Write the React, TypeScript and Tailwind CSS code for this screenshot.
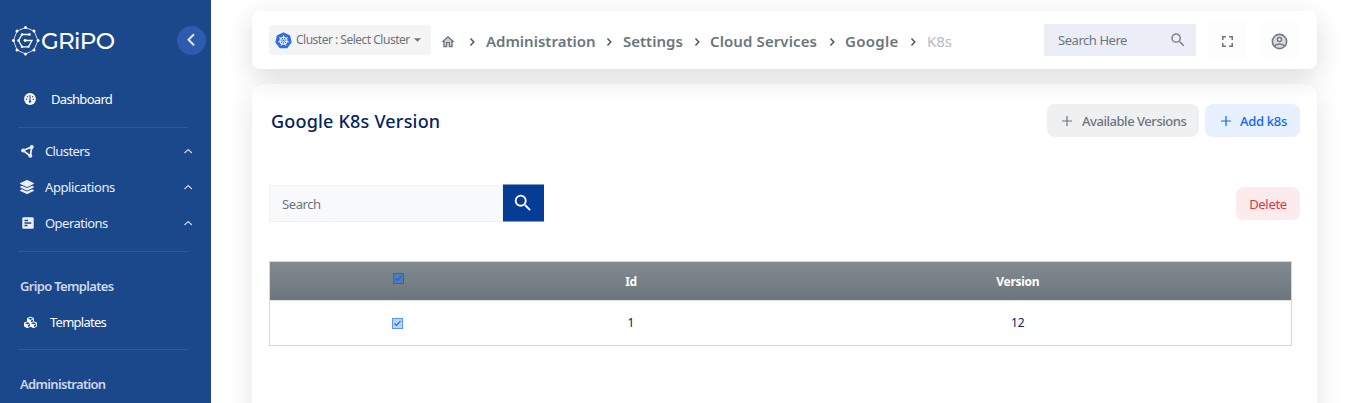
import type { ReactNode } from "react";
import { FaLayerGroup, FaCubes } from "react-icons/fa";

type IconProps = { className?: string };

function Logo() {
  const outer: [number, number][] = [[13.5, 1.5], [22, 5], [26, 14.5], [22, 24], [13.5, 28], [5, 24], [1.5, 14.5], [5, 5]];
  return (
    <svg viewBox="0 0 28 30" className="h-[30px] w-[28px] text-white" fill="none" stroke="currentColor">
      <polygon points={outer.map((p) => p.join(",")).join(" ")} strokeWidth=".8" />
      {outer.map(([x, y]) => (
        <circle key={x + "-" + y} cx={x} cy={y} r="1.5" fill="currentColor" stroke="none" />
      ))}
      <path d="M17.500 8.500H10L6.500 14.500L10 20.800H16.500L20 14.500H13" strokeWidth="1.300" />
      <g fill="currentColor" stroke="none">
        <circle cx="17.500" cy="8.500" r="1.300" />
        <circle cx="10" cy="8.500" r="1.200" />
        <circle cx="6.500" cy="14.500" r="1.300" />
        <circle cx="10" cy="20.800" r="1.200" />
        <circle cx="16.500" cy="20.800" r="1" />
        <circle cx="13" cy="14.500" r="1.400" />
      </g>
    </svg>
  );
}

function GaugeIcon({ className }: IconProps) {
  return (
    <svg viewBox="0 0 12 12" className={className}>
      <circle cx="6" cy="6" r="5.900" fill="currentColor" />
      <path d="M6 2V8" stroke="#1b478b" strokeWidth="1.100" />
      <circle cx="6" cy="8.600" r="1.200" fill="#1b478b" />
      <circle cx="3.500" cy="3.700" r=".7" fill="#1b478b" />
      <circle cx="8.500" cy="3.700" r=".7" fill="#1b478b" />
      <circle cx="2.500" cy="6.200" r=".8" fill="#1b478b" />
      <circle cx="9.500" cy="6.200" r=".8" fill="#1b478b" />
    </svg>
  );
}

function ClusterIcon({ className }: IconProps) {
  return (
    <svg viewBox="0 0 13 13" className={className}>
      <path d="M2 5.500L10.800 1.900L9.300 11Z" fill="none" stroke="currentColor" strokeWidth="1.800" />
      <circle cx="2.100" cy="5.500" r="2" fill="currentColor" />
      <circle cx="10.800" cy="2.100" r="2" fill="currentColor" />
      <circle cx="9.300" cy="10.800" r="2" fill="currentColor" />
    </svg>
  );
}

function OperationsIcon({ className }: IconProps) {
  return (
    <svg viewBox="0 0 12 12" className={className}>
      <rect x=".3" y=".3" width="11.400" height="11.400" rx="1.300" fill="currentColor" />
      <path d="M2.500 3.500H6M2.500 6H9.300M2.500 8.500H5.500" stroke="#1b478b" strokeWidth="1.400" />
    </svg>
  );
}

function KubernetesIcon() {
  const spokes = [0, 51.43, 102.86, 154.29, 205.71, 257.14, 308.57];
  return (
    <svg viewBox="0 0 18 18" className="h-[17px] w-[17px] shrink-0">
      <path d="M9 1.200L15.300 4.200L16.800 11L12.500 16.500H5.500L1.200 11L2.700 4.200Z" fill="#326ce5" stroke="#326ce5" strokeWidth="1.600" strokeLinejoin="round" />
      <g stroke="#fff" fill="none">
        <circle cx="9" cy="9.200" r="3.700" strokeWidth="1.100" />
        {spokes.map((a) => (
          <path key={a} d="M9 8.400V3.400" strokeWidth=".9" transform={`rotate(${a} 9 9.200)`} />
        ))}
      </g>
    </svg>
  );
}

function HomeIcon() {
  return (
    <svg viewBox="0 0 24 24" className="h-4 w-4" fill="#6c757d">
      <path opacity=".35" d="M5 9.800V19h4v-6h6v6h4V9.800l-7-6.300z" />
      <path d="M12 3L2 12h3v8h6v-6h2v6h6v-8h3L12 3zm5 15h-2v-6H9v6H7v-7.810l5-4.500 5 4.500V18z" />
    </svg>
  );
}

function SearchIcon({ className }: IconProps) {
  return (
    <svg viewBox="0 0 24 24" className={className} fill="currentColor">
      <path d="M15.500 14h-.79l-.28-.27A6.471 6.471 0 0 0 16 9.500 6.500 6.500 0 1 0 9.500 16c1.610 0 3.090-.59 4.230-1.570l.27.28v.79l5 4.990L20.490 19l-4.990-5zm-6 0C7.010 14 5 11.990 5 9.500S7.010 5 9.500 5 14 7.010 14 9.500 11.990 14 9.500 14z" />
    </svg>
  );
}

function PlusIcon({ className }: IconProps) {
  return (
    <svg viewBox="0 0 10 10" className={className}>
      <path d="M5 0V10M0 5H10" stroke="currentColor" strokeWidth="1.200" />
    </svg>
  );
}

function Caret({ className }: IconProps) {
  return (
    <svg viewBox="0 0 10 10" className={className} fill="none" stroke="#495057">
      <path d="M3.500 1.500L6.800 5L3.500 8.500" strokeWidth="1.400" />
    </svg>
  );
}

function Group({ icon, children }: { icon: ReactNode; children: ReactNode }) {
  return (
    <div className="flex h-9 items-center pl-5 pr-[18px] text-[#e9eef7]">
      <span className="flex w-[25px]">{icon}</span>
      <span className="flex-1 pt-[2px] text-[13px]">{children}</span>
      <svg viewBox="0 0 10 10" className="h-[10px] w-[10px]" fill="none" stroke="#c8d4e8">
        <path d="M1.500 7L5.200 3.500L8.900 7" strokeWidth="1.200" />
      </svg>
    </div>
  );
}

function Divider() {
  return <div className="ml-[18px] mr-[23px] h-px shrink-0 bg-[#31599a]" />;
}

function Heading({ children }: { children: ReactNode }) {
  return (
    <div className="mt-[16px] flex h-9 shrink-0 items-center pl-5 pt-[2px] text-[13px] font-semibold tracking-[-0.68px] text-[#cbd7ea]">
      {children}
    </div>
  );
}

function Sidebar() {
  return (
    <aside className="flex h-full w-[211px] shrink-0 flex-col overflow-hidden bg-[#1b478b] text-white">
      <div className="flex h-[80px] shrink-0 items-center justify-between pl-3 pr-[5px]">
        <div className="flex items-center pt-[2px]">
          <Logo />
          <span className="ml-[1px] font-[Montserrat,'Lato',sans-serif] text-[23px] font-medium leading-none tracking-[-0.7px]">GRiPO</span>
        </div>
        <div className="flex h-[29px] w-[29px] items-center justify-center rounded-full bg-[#2d5cae]">
          <svg viewBox="0 0 14 14" className="h-[14px] w-[14px]" fill="none" stroke="#dbe5f5" strokeWidth="2">
            <path d="M9 1.200L3.500 6.700L9 12.200" />
          </svg>
        </div>
      </div>
      <div className="flex h-[38px] shrink-0 items-center pl-6 text-[13px] tracking-[-0.68px]">
        <GaugeIcon className="mr-[15px] h-3 w-3" />
        <span className="pt-[2px]">Dashboard</span>
      </div>
      <div className="h-[9px] shrink-0" />
      <Divider />
      <div className="mt-[5px] flex h-[118px] shrink-0 flex-col">
        <Group icon={<ClusterIcon className="ml-px h-[13px] w-[13px]" />}><span className="tracking-[-0.6px]">Clusters</span></Group>
        <Group icon={<FaLayerGroup size={14} />}><span className="tracking-[-0.4px]">Applications</span></Group>
        <Group icon={<OperationsIcon className="ml-[2px] h-3 w-3" />}><span className="tracking-[-0.53px]">Operations</span></Group>
      </div>
      <Divider />
      <Heading>Gripo Templates</Heading>
      <div className="flex h-9 shrink-0 items-center pl-6 text-[13px] tracking-[-0.75px]">
        <FaCubes size={13} className="mr-[13px]" />
        <span className="pt-[2px]">Templates</span>
      </div>
      <div className="h-[9px] shrink-0" />
      <Divider />
      <Heading>Administration</Heading>
    </aside>
  );
}

function Header() {
  return (
    <header className="relative z-10 flex h-[58px] shrink-0 items-center rounded-lg bg-white pl-[17px] pr-[19px] shadow-[0_8px_28px_rgba(0,0,0,0.14)]">
      <div className="flex h-[30px] w-[162px] shrink-0 items-center rounded bg-[#f4f4f4] pl-[6px] text-[12px] text-[#6c757d]">
        <KubernetesIcon />
        <span className="ml-1 whitespace-nowrap tracking-[-0.5px]">Cluster : Select Cluster</span>
        <svg viewBox="0 0 8 4" className="ml-1 h-1 w-[7px]" fill="#6c757d"><path d="M0 0H8L4 4Z" /></svg>
      </div>
      <nav className="flex items-center whitespace-nowrap pt-[3px] text-[15px] font-semibold text-[#6c757d]">
        <span className="ml-[9px]"><HomeIcon /></span>
        <Caret className="ml-[11px] mr-[9px] h-[10px] w-[10px]" />
        <span className="w-[109px]">Administration</span>
        <Caret className="mx-[9px] h-[10px] w-[10px]" />
        <span className="w-[60px]">Settings</span>
        <Caret className="ml-[9px] mr-2 h-[10px] w-[10px]" />
        <span className="w-[108px] tracking-[0.1px]">Cloud Services</span>
        <Caret className="ml-[9px] mr-2 h-[10px] w-[10px]" />
        <span className="w-[54px] tracking-[0.3px]">Google</span>
        <Caret className="mx-[9px] h-[10px] w-[10px]" />
        <span className="font-normal text-[#b5bcc5]">K8s</span>
      </nav>
      <div className="ml-auto flex h-8 w-[152px] items-center justify-between bg-[#ebeef7] pl-[14px] pr-[9px] text-[13px] text-[#6c757d]">
        <span className="pt-px tracking-[-0.45px]">Search Here</span>
        <SearchIcon className="h-[18px] w-[18px] text-[#7e8390]" />
      </div>
      <div className="ml-[12px] flex h-[38px] w-[38px] items-center justify-center bg-[#fdfdfe] pt-[2px]">
        <svg viewBox="0 0 24 24" className="h-[19px] w-[19px]" fill="#6c757d"><path d="M7 14H5v5h5v-2H7v-3zm-2-4h2V7h3V5H5v5zm12 7h-3v2h5v-5h-2v3zM14 5v2h3v3h2V5h-5z" /></svg>
      </div>
      <div className="ml-[14px] flex h-[38px] w-[38px] items-center justify-center bg-[#fdfdfe] pt-[2px]">
        <svg viewBox="0 0 24 24" className="h-[19px] w-[19px]" fill="none" stroke="#777b81" strokeWidth="2">
          <circle cx="12" cy="12" r="9" fill="#d8dadd" />
          <circle cx="12" cy="9.500" r="2.500" fill="#fff" />
          <path d="M5.500 18C8 14.300 16 14.300 18.500 18" />
        </svg>
      </div>
    </header>
  );
}

function CheckBox({ dark }: { dark?: boolean }) {
  return (
    <svg viewBox="0 0 11 11" className="h-[11px] w-[11px]" role="img">
      <rect x=".5" y=".5" width="10" height="10" fill={dark ? "#4f7cb8" : "#bcd4fb"} stroke={dark ? "#1c65e5" : "#5a94f5"} />
      <path d="M2.500 5.500L4.500 7.500L8.500 3.200" fill="none" stroke="#1c65e5" strokeWidth="1.200" />
    </svg>
  );
}

export default function App() {
  return (
    <div className="flex h-[403px] w-[1357px] overflow-hidden bg-white font-['Noto_Sans','Open_Sans',sans-serif]">
      <Sidebar />
      <main className="flex flex-1 flex-col pl-[41px] pr-10 pt-[11px]">
        <Header />
        <section className="mt-[15px] h-[360px] shrink-0 rounded-xl bg-white pl-[17px] pr-[17px] shadow-[0_8px_28px_rgba(0,0,0,0.11)]">
          <div className="flex h-[73px] items-center">
            <h1 className="pl-[2px] pt-[2px] text-[18px] font-medium tracking-[0.2px] text-[#05245c]">Google K8s Version</h1>
            <button className="ml-auto flex h-[33px] w-[152px] items-center rounded-lg bg-[#eff0f1] pl-[15px] text-[13px] font-medium text-[#6c757d]">
              <PlusIcon className="mr-[10px] mt-px h-[10px] w-[10px] shrink-0" />
              <span className="whitespace-nowrap pt-[2px] tracking-[-0.46px]">Available Versions</span>
            </button>
            <button className="ml-[6px] flex h-[33px] w-[95px] items-center rounded-lg bg-[#e6f0ff] pl-4 text-[13px] font-medium text-[#1565f5]">
              <PlusIcon className="mr-[9px] mt-px h-[10px] w-[10px] shrink-0" />
              <span className="whitespace-nowrap pt-[2px] tracking-[-0.3px]">Add k8s</span>
            </button>
          </div>
          <div className="mt-[27px] flex h-[38px] items-end">
            <div className="flex h-[37px] w-[234px] items-center border border-[#f1f2f4] bg-[#f8f9fb] pl-3 pt-[2px] text-[13px] tracking-[-0.4px] text-[#6c757d]">Search</div>
            <button className="flex h-[38px] w-[41px] items-center justify-center border-y border-[#8099c9] bg-[#053d96] pr-[2px] text-white">
              <SearchIcon className="h-[22px] w-[22px]" />
            </button>
            <button className="ml-auto mb-[2px] h-[33px] w-[64px] rounded-lg bg-[#fcebec] pt-[2px] text-[13px] tracking-[-0.3px] text-[#dc3545]">Delete</button>
          </div>
          <table className="mt-[39px] w-[1023px] table-fixed border-collapse border border-[#d3d7da] text-center text-[12px] text-[#05245c]">
            <colgroup>
              <col className="w-[257px]" />
              <col className="w-[209px]" />
              <col />
            </colgroup>
            <thead>
              <tr className="h-[39px] bg-linear-to-b from-[#828a91] to-[#6c757d] font-bold text-white">
                <th><span className="flex justify-center pb-[5px]"><CheckBox dark /></span></th>
                <th className="pt-[2px] tracking-[-0.3px]">Id</th>
                <th className="pl-[9px] pt-[2px] tracking-[-0.3px]">Version</th>
              </tr>
            </thead>
            <tbody>
              <tr className="h-[45px] border-t border-[#dee2e6]">
                <td><span className="flex justify-center pr-[2px]"><CheckBox /></span></td>
                <td>1</td>
                <td className="pl-[9px]">12</td>
              </tr>
            </tbody>
          </table>
        </section>
      </main>
    </div>
  );
}
